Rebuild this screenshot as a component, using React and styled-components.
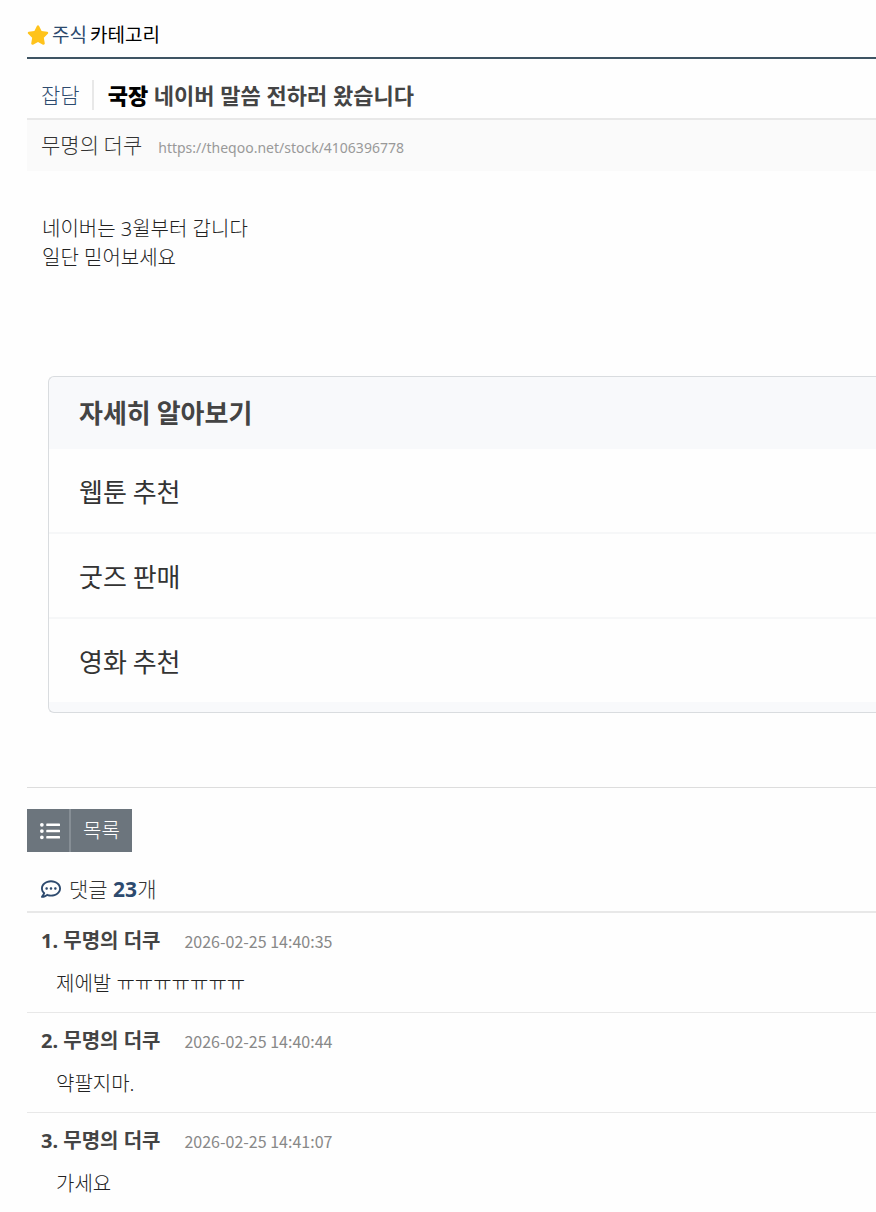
import React from 'react';
import styled, { createGlobalStyle } from 'styled-components';
import { FaStar, FaListUl, FaRegCommentDots } from 'react-icons/fa';

const GlobalStyle = createGlobalStyle`
    * {
        box-sizing: border-box;
    }
    body {
        margin: 0;
        background: #fefefe;
        color: #333;
        font-family: 'Noto Sans', 'Noto Sans CJK KR', sans-serif;
        font-size: 20px;
        line-height: 30px;
    }
    h1, h2, p, ul, ol {
        margin: 0;
        padding: 0;
        font-size: inherit;
        font-weight: inherit;
    }
    ul, ol {
        list-style: none;
    }
    a {
        color: inherit;
        text-decoration: none;
    }
`;

const Page = styled.main`
    padding: 20px 0 16px 27px;
`;

const Category = styled.header`
    display: flex;
    align-items: center;
    gap: 3px;
    height: 39px;
    padding-bottom: 7px;
    border-bottom: 2px solid #3e5463;
    color: #000;
    font-size: 19px;

    svg {
        color: #ffc31b;
    }
    a {
        color: #2d4a6e;
    }
`;

const TitleRow = styled.div`
    display: flex;
    align-items: center;
    padding: 21px 14px 8px;
    border-bottom: 2px solid #e8e8e8;
`;

const Tag = styled.a`
    padding-right: 12px;
    border-right: 2px solid #e8e8e8;
    font-size: 21px;
    font-weight: 300;
    && {
        color: #2d4a6e;
    }
`;

const Title = styled.h1`
    padding-left: 14px;
    color: #444;
    font-size: 22px;
    font-weight: 700;

    strong {
        color: #000;
    }
`;

const Meta = styled.div`
    display: flex;
    align-items: baseline;
    gap: 16px;
    height: 51px;
    padding: 9px 14px;
    background: #fafafa;
`;

const Author = styled.span`
    color: #333;
    font-family: 'Noto Sans CJK KR', sans-serif;
    font-size: 21px;
    font-weight: 300;
`;

const Permalink = styled.a`
    && {
        color: #999;
    }
    font-size: 14px;
`;

const Body = styled.article`
    padding: 43px 15px 104px;
    color: #222;
    font-weight: 300;
    line-height: 29px;
`;

const Related = styled.section`
    margin-left: 21px;
    padding-bottom: 10px;
    border: 1px solid #d9dcdf;
    border-right: 0;
    border-radius: 6px 0 0 6px;
    background: #f8f9fb;
    font-family: 'Noto Sans CJK KR', sans-serif;
    font-size: 26px;
`;

const RelatedTitle = styled.h2`
    padding: 15px 30px 17px;
    color: #444;
    font-size: 26px;
    font-weight: 700;
    line-height: 40px;
`;

const RelatedItem = styled.li`
    background: #fefefe;

    & + & {
        border-top: 2px solid #f6f7f8;
    }
    a {
        display: block;
        padding: 22px 30px 21px;
        line-height: 40px;
    }
`;

const Actions = styled.div`
    margin-top: 74px;
    padding-top: 21px;
    border-top: 1px solid #ddd;
`;

const ListButton = styled.button`
    display: flex;
    align-items: stretch;
    height: 43px;
    padding: 0;
    border: 0;
    background: #6c757d;
    color: #fff;
    font-family: inherit;
    font-size: 20px;
    font-weight: 300;
`;

const ButtonIcon = styled.span`
    display: flex;
    align-items: center;
    padding: 0 9px 0 13px;
    border-right: 2px solid #868e95;
`;

const ButtonLabel = styled.span`
    padding: 0 12px;
    line-height: 43px;
`;

const CommentsHeader = styled.h2`
    display: flex;
    align-items: center;
    gap: 8px;
    padding: 22px 14px 7px;
    border-bottom: 2px solid #e8e8e8;
    font-size: 21px;
    font-weight: 300;

    svg {
        color: #2d4a6e;
    }
    strong {
        color: #2d4a6e;
        font-weight: 700;
    }
`;

const Comment = styled.li`
    padding: 13px 14px;

    & + & {
        border-top: 1px solid #e8e8e8;
    }
`;

const CommentMeta = styled.div`
    display: flex;
    align-items: baseline;
    gap: 24px;
`;

const CommentAuthor = styled.span`
    color: #444;
    font-weight: 700;
`;

const CommentTime = styled.time`
    color: #888;
    font-family: 'Noto Sans CJK KR', sans-serif;
    font-size: 16px;
`;

const CommentText = styled.p`
    padding: 13px 15px 0;
    color: #222;
    font-weight: 300;
`;

const related = ['웹툰 추천', '굿즈 판매', '영화 추천'];

const comments = [
    { id: 1, time: '2026-02-25 14:40:35', text: '제에발 ㅠㅠㅠㅠㅠㅠㅠ' },
    { id: 2, time: '2026-02-25 14:40:44', text: '약팔지마.' },
    { id: 3, time: '2026-02-25 14:41:07', text: '가세요' },
];

export default function App() {
    return (
        <>
            <GlobalStyle />
            <Page>
                <Category>
                    <FaStar size={22} />
                    <a href="#stock">주식</a>
                    <span>카테고리</span>
                </Category>
                <TitleRow>
                    <Tag href="#talk">잡담</Tag>
                    <Title>
                        <strong>국장</strong> 네이버 말씀 전하러 왔습니다
                    </Title>
                </TitleRow>
                <Meta>
                    <Author>무명의 더쿠</Author>
                    <Permalink href="#post">https://theqoo.net/stock/4106396778</Permalink>
                </Meta>
                <Body>
                    <p>네이버는 3윌부터 갑니다</p>
                    <p>일단 믿어보세요</p>
                </Body>
                <Related>
                    <RelatedTitle>자세히 알아보기</RelatedTitle>
                    <ul>
                        {related.map((name) => (
                            <RelatedItem key={name}>
                                <a href="#related">{name}</a>
                            </RelatedItem>
                        ))}
                    </ul>
                </Related>
                <Actions>
                    <ListButton type="button">
                        <ButtonIcon>
                            <FaListUl size={20} />
                        </ButtonIcon>
                        <ButtonLabel>목록</ButtonLabel>
                    </ListButton>
                </Actions>
                <CommentsHeader>
                    <FaRegCommentDots size={20} />
                    <span>
                        댓글 <strong>23</strong>개
                    </span>
                </CommentsHeader>
                <ol>
                    {comments.map(({ id, time, text }) => (
                        <Comment key={id}>
                            <CommentMeta>
                                <CommentAuthor>{id}. 무명의 더쿠</CommentAuthor>
                                <CommentTime>{time}</CommentTime>
                            </CommentMeta>
                            <CommentText>{text}</CommentText>
                        </Comment>
                    ))}
                </ol>
            </Page>
        </>
    );
}
